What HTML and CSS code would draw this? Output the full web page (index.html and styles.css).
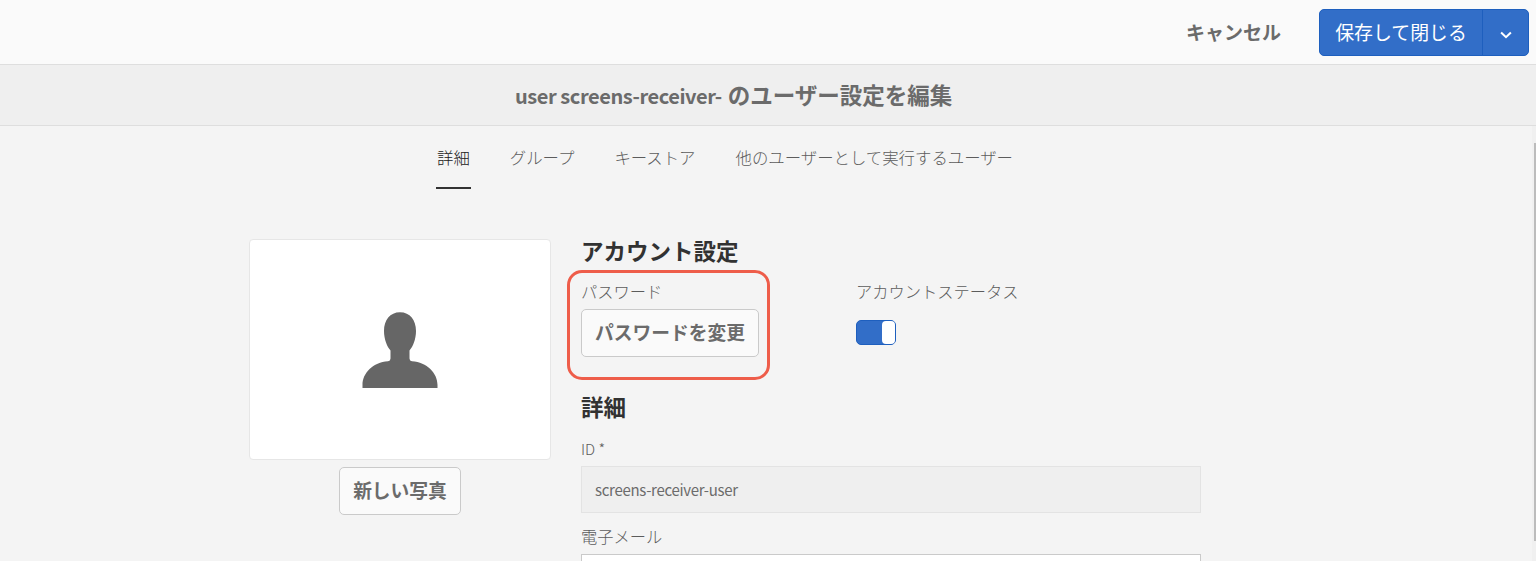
FILE: index.html
```html
<!DOCTYPE html>
<html lang="ja">
<head>
<meta charset="utf-8">
<title>ユーザー設定を編集</title>
<link rel="stylesheet" href="styles.css">
</head>
<body>
<header class="topbar">
  <button class="btn-quiet"><span class="label">キャンセル</span></button>
  <div class="split">
    <button class="btn-primary"><span class="label">保存して閉じる</span></button>
    <button class="btn-more" aria-label="その他">
      <svg width="12" height="8" viewBox="0 0 12 8"><path d="M1.100 1.500 6 6.200l4.900-4.700" fill="none" stroke="#fff" stroke-width="2"/></svg>
    </button>
  </div>
</header>
<div class="titlebar"><h1 class="title"><span class="title-user">user screens-receiver-</span><span class="title-ja">のユーザー設定を編集</span></h1></div>
<main class="page">
  <nav class="tabs">
    <a class="tab tab-active">詳細</a>
    <a class="tab">グループ</a>
    <a class="tab">キーストア</a>
    <a class="tab">他のユーザーとして実行するユーザー</a>
  </nav>
  <div class="columns">
    <section class="photo-col">
      <div class="photo">
        <svg class="avatar" width="76" height="77" viewBox="0 0 76 77"><path fill="#666" d="M38 .3C48 .3 54 8 54 19C54 27 51 34.500 47.500 38.500V46.500Q47.500 49 50 49.300C65 50.500 75.500 61 75.500 73V76H.5V73C.5 61 11 50.500 26 49.300Q28.500 49 28.500 46.500V38.500C25 34.500 22 27 22 19C22 8 28 .3 38 .3Z"/></svg>
      </div>
      <button class="btn photo-btn"><span class="label">新しい写真</span></button>
    </section>
    <section class="form-col">
      <h2 class="heading">アカウント設定</h2>
      <div class="account">
        <div class="password">
          <div class="field-label">パスワード</div>
          <button class="btn password-btn"><span class="label">パスワードを変更</span></button>
          <div class="highlight"></div>
        </div>
        <div class="status">
          <div class="field-label">アカウントステータス</div>
          <div class="switch"><div class="switch-knob"></div></div>
        </div>
      </div>
      <h2 class="heading">詳細</h2>
      <div class="field-label id-label">ID *</div>
      <div class="input input-disabled">screens-receiver-user</div>
      <div class="field-label mail-label">電子メール</div>
      <div class="input"></div>
    </section>
  </div>
  <div class="scrollbar"><div class="scroll-thumb"></div></div>
</main>
</body>
</html>
```

FILE: styles.css
```css
* { box-sizing: border-box; }
body {
  margin: 0;
  height: 561px;
  overflow: hidden;
  display: flex;
  flex-direction: column;
  background: #f4f4f4;
  color: #6b6b6b;
  font-family: "Noto Sans CJK JP", sans-serif;
}
button { font: inherit; color: inherit; padding: 0; margin: 0; border: 0; background: none; }
.topbar {
  flex: none;
  height: 65px;
  padding: 9px 7px 0 0;
  display: flex;
  justify-content: flex-end;
  gap: 38px;
  background: #fafafa;
  border-bottom: 1px solid #dedede;
}
.btn-quiet, .btn-primary, .btn-more, .btn { height: 47px; font-size: 18.75px; line-height: 45px; white-space: nowrap; }
.btn-quiet { height: 45px; font-size: 19px; font-weight: 700; }
.split {
  display: flex;
  width: 210px;
  height: 47px;
  background: #326ec8;
  border: 1px solid #1e5fbe;
  border-radius: 5px;
  color: #fff;
}
.btn-primary { width: 163px; height: 45px; padding-bottom: 2px; line-height: 43px; font-size: 18.9px; border-right: 1px solid #1e5fbe; }
.btn-more { flex: 1; height: 45px; display: flex; align-items: center; justify-content: center; padding-top: 5px; }
.titlebar {
  flex: none;
  height: 61px;
  padding-left: 515px;
  background: #efefef;
  border-bottom: 1px solid #dedede;
}
.title { margin: 0; display: flex; align-items: baseline; gap: 6px; font-size: 22.5px; line-height: 58px; font-weight: 700; white-space: nowrap; }
.title-user { font-size: 20px; letter-spacing: -0.43px; }
.page { position: relative; flex: 1; min-height: 0; overflow: hidden; }
.tabs { display: flex; gap: 38px; padding-left: 436px; height: 63px; }
.tab { height: 63px; padding: 0 1px; font-size: 16.4px; line-height: 63px; font-weight: 300; color: #5c5c5c; white-space: nowrap; }
.tab-active { color: #202020; border-bottom: 2px solid #323232; }
.columns { display: flex; gap: 30px; padding: 50px 0 0 249px; }
.photo-col { width: 302px; display: flex; flex-direction: column; align-items: center; gap: 7px; }
.photo {
  width: 302px;
  height: 221px;
  display: flex;
  justify-content: center;
  align-items: center;
  padding-top: 2px;
  background: #fff;
  border: 1px solid #e6e6e6;
  border-radius: 4px;
}
.btn { height: 48px; padding-bottom: 2px; line-height: 44px; font-weight: 700; background: #fafafa; border: 1px solid #cacaca; border-radius: 5px; }
.photo-btn { width: 122px; }
.form-col { width: 620px; }
.heading { margin: 0; height: 24px; font-size: 22.5px; line-height: 22px; font-weight: 700; color: #323232; }
.account { display: flex; gap: 97px; height: 132px; padding-top: 17px; }
.password { position: relative; width: 178px; }
.field-label { height: 24px; font-size: 16.25px; line-height: 22px; font-weight: 300; color: #5c5c5c; white-space: nowrap; }
.password-btn { width: 178px; margin-top: 5px; }
.highlight {
  position: absolute;
  left: -14px;
  top: -10px;
  width: 203px;
  height: 110px;
  border: 3px solid #ee5d4a;
  border-radius: 15px;
}
.switch {
  width: 40px;
  height: 25px;
  margin-top: 16px;
  display: flex;
  justify-content: flex-end;
  background: #326ec8;
  border: 1px solid #1e5fbe;
  border-radius: 5px;
}
.switch-knob { width: 13px; background: #fff; border-radius: 4px; }
.id-label { margin-top: 18px; font-size: 15px; line-height: 24px; }
.input { height: 47px; padding-left: 13px; background: #fff; border: 1px solid #cacaca; font-size: 15px; line-height: 46px; letter-spacing: -0.3px; }
.input-disabled { margin-top: 5px; background: #efefef; border-color: #e3e3e3; }
.mail-label { margin-top: 12px; margin-bottom: 5px; }
.scrollbar { position: absolute; top: 0; right: 0; width: 4px; height: 100%; padding: 17px 0 0 2px; background: #f0f0f0; }
.scroll-thumb { height: 398px; background: #bcbcbc; }
```
